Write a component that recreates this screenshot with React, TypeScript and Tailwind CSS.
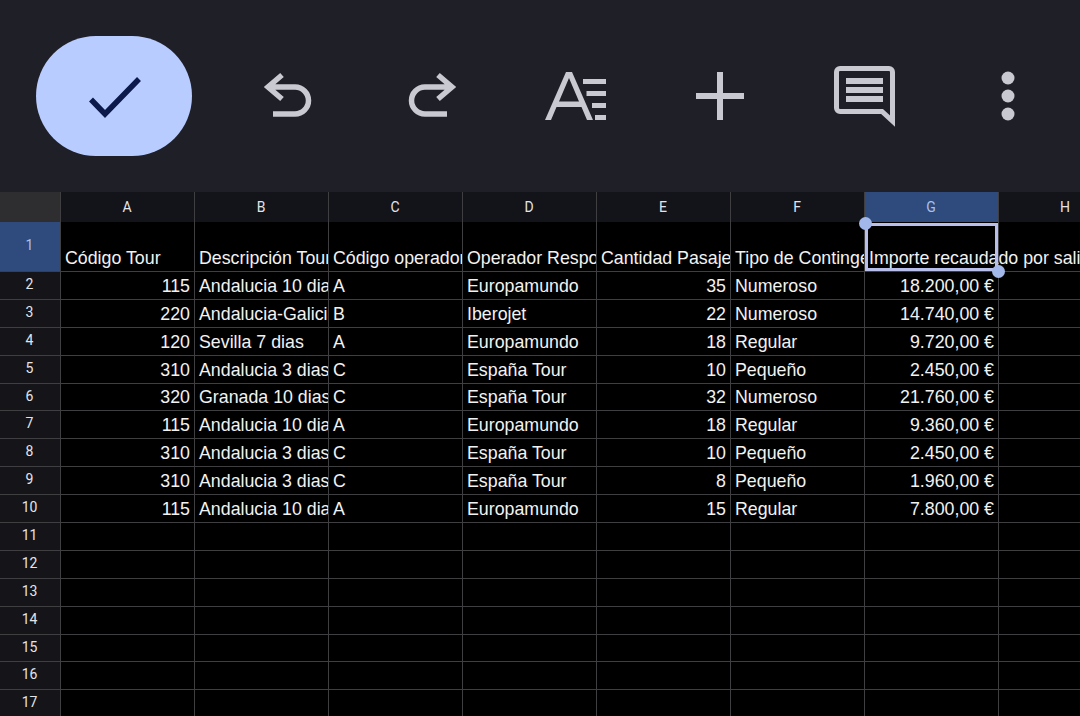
const COLUMNS = ["A", "B", "C", "D", "E", "F", "G", "H"];

const HEADERS = [
  "Código Tour",
  "Descripción Tour",
  "Código operador",
  "Operador Responsable",
  "Cantidad Pasajeros",
  "Tipo de Contingente",
  "Importe recaudado por salida",
];

const ROWS: (string | number)[][] = [
  [115, "Andalucia 10 dias", "A", "Europamundo", 35, "Numeroso", "18.200,00 €"],
  [220, "Andalucia-Galicia", "B", "Iberojet", 22, "Numeroso", "14.740,00 €"],
  [120, "Sevilla 7 dias", "A", "Europamundo", 18, "Regular", "9.720,00 €"],
  [310, "Andalucia 3 dias", "C", "España Tour", 10, "Pequeño", "2.450,00 €"],
  [320, "Granada 10 dias", "C", "España Tour", 32, "Numeroso", "21.760,00 €"],
  [115, "Andalucia 10 dias", "A", "Europamundo", 18, "Regular", "9.360,00 €"],
  [310, "Andalucia 3 dias", "C", "España Tour", 10, "Pequeño", "2.450,00 €"],
  [310, "Andalucia 3 dias", "C", "España Tour", 8, "Pequeño", "1.960,00 €"],
  [115, "Andalucia 10 dias", "A", "Europamundo", 15, "Regular", "7.800,00 €"],
];

const EMPTY_ROWS = [11, 12, 13, 14, 15, 16, 17];

function ToolIcon({ children }: { children: React.ReactNode }) {
  return (
    <div className="flex w-[144px] flex-none items-center justify-center">
      <svg width="72" height="72" viewBox="0 0 72 72" fill="none" stroke="#c9c9d1">
        {children}
      </svg>
    </div>
  );
}

function Toolbar() {
  return (
    <div className="flex h-[192px] flex-none items-center bg-[#1f1f27] pl-9">
      <div className="mr-6 flex h-[120px] w-[156px] flex-none items-center justify-center rounded-[60px] bg-[#b8ccff]">
        <svg width="72" height="72" viewBox="0 0 72 72" fill="none">
          <path d="M13 39.500 L27 54 L61 19" stroke="#0c1a4b" strokeWidth="5.500" />
        </svg>
      </div>
      <ToolIcon>
        <path d="M30 15 L16 27 L30 39 M16 27 H43 A13.500 13.500 0 0 1 43 54 H21" strokeWidth="5.500" />
      </ToolIcon>
      <ToolIcon>
        <path d="M42 15 L56 27 L42 39 M56 27 H29 A13.500 13.500 0 0 0 29 54 H51" strokeWidth="5.500" />
      </ToolIcon>
      <ToolIcon>
        <g fill="#c9c9d1" stroke="none">
          <path d="M5 60 L26 12 H32 L53 60 H47 L41.500 47 H16.500 L11 60 Z M19 41.500 H39 L29 18 Z" />
          <rect x="43" y="19" width="23" height="5" />
          <rect x="46.500" y="31" width="19.500" height="5" />
          <rect x="52" y="43" width="14" height="5" />
          <rect x="55" y="55" width="11" height="5" />
        </g>
      </ToolIcon>
      <ToolIcon>
        <path d="M36 12 V60 M12 36 H60" strokeWidth="6" />
      </ToolIcon>
      <ToolIcon>
        <path
          d="M12 8.500 H61 A3.500 3.500 0 0 1 64.500 12 V61 L54 51.500 H12 A3.500 3.500 0 0 1 8.500 48 V12 A3.500 3.500 0 0 1 12 8.500 Z"
          strokeWidth="5"
        />
        <path d="M18 21 H55 M18 30 H55 M18 39 H55" strokeWidth="6" />
      </ToolIcon>
      <ToolIcon>
        <g fill="#c9c9d1" stroke="none">
          <circle cx="36" cy="18" r="6.500" />
          <circle cx="36" cy="36" r="6.500" />
          <circle cx="36" cy="54" r="6.500" />
        </g>
      </ToolIcon>
    </div>
  );
}

function Cell({ value, overflow }: { value?: string | number; overflow?: boolean }) {
  const numeric = typeof value === "number" || (typeof value === "string" && value.endsWith("€"));
  return (
    <div
      className={`flex h-full w-[134px] flex-none items-end whitespace-nowrap border-r border-b border-[#3f3f42] px-1 pb-[2px] text-[17.800px] leading-[22px] text-[#f2f2f2] ${
        numeric ? "justify-end" : "justify-start"
      } ${overflow ? "overflow-visible" : "overflow-hidden"}`}
    >
      {value}
    </div>
  );
}

function RowHeader({ label, active }: { label: number; active?: boolean }) {
  return (
    <div
      className={`flex h-full w-[61px] flex-none items-center justify-center border-r border-b border-[#3f3f42] pb-[2px] pr-[1px] font-['Roboto',sans-serif] text-[14px] ${
        active ? "bg-[#2f4a7c] text-[#a9c0ea]" : "bg-[#141419] text-[#e4e4e8]"
      }`}
    >
      {label}
    </div>
  );
}

function Sheet() {
  return (
    <div className="relative flex-1 overflow-hidden bg-black font-['Liberation_Sans',sans-serif]">
      <div className="flex h-[30px]">
        <div className="w-[61px] flex-none border-r border-[#3f3f42] bg-[#2e2e30]" />
        {COLUMNS.map((col) => (
          <div
            key={col}
            className={`flex w-[134px] flex-none items-center justify-center border-r border-[#3f3f42] pr-[1px] font-['Roboto',sans-serif] text-[14px] ${
              col === "G" ? "bg-[#2f4a7c] text-[#a9c0ea]" : "bg-[#13131a] text-[#e4e4e8]"
            }`}
          >
            {col}
          </div>
        ))}
      </div>

      <div className="flex h-[50px]">
        <RowHeader label={1} active />
        {HEADERS.map((h, i) => (
          <Cell key={h} value={h} overflow={i === 6} />
        ))}
        <Cell />
      </div>

      {ROWS.map((row, i) => (
        <div key={i} className="flex h-[27.9px]">
          <RowHeader label={i + 2} />
          {row.map((v, j) => (
            <Cell key={j} value={v} />
          ))}
          <Cell />
        </div>
      ))}

      {EMPTY_ROWS.map((n) => (
        <div key={n} className="flex h-[27.9px]">
          <RowHeader label={n} />
          {COLUMNS.map((col) => (
            <Cell key={col} />
          ))}
        </div>
      ))}

      {/* selection box over G1 */}
      <div className="absolute top-[31px] left-[865px] h-[48px] w-[133px] border-[3px] border-[#b9bfeb]" />
      <div className="absolute top-[25px] left-[858.500px] h-[13px] w-[13px] rounded-full bg-[#a3b8ea]" />
      <div className="absolute top-[72.500px] left-[991.500px] h-[13px] w-[13px] rounded-full bg-[#a3b8ea]" />
    </div>
  );
}

export default function App() {
  return (
    <div className="flex h-[716px] w-[1080px] flex-col overflow-hidden">
      <Toolbar />
      <Sheet />
    </div>
  );
}
